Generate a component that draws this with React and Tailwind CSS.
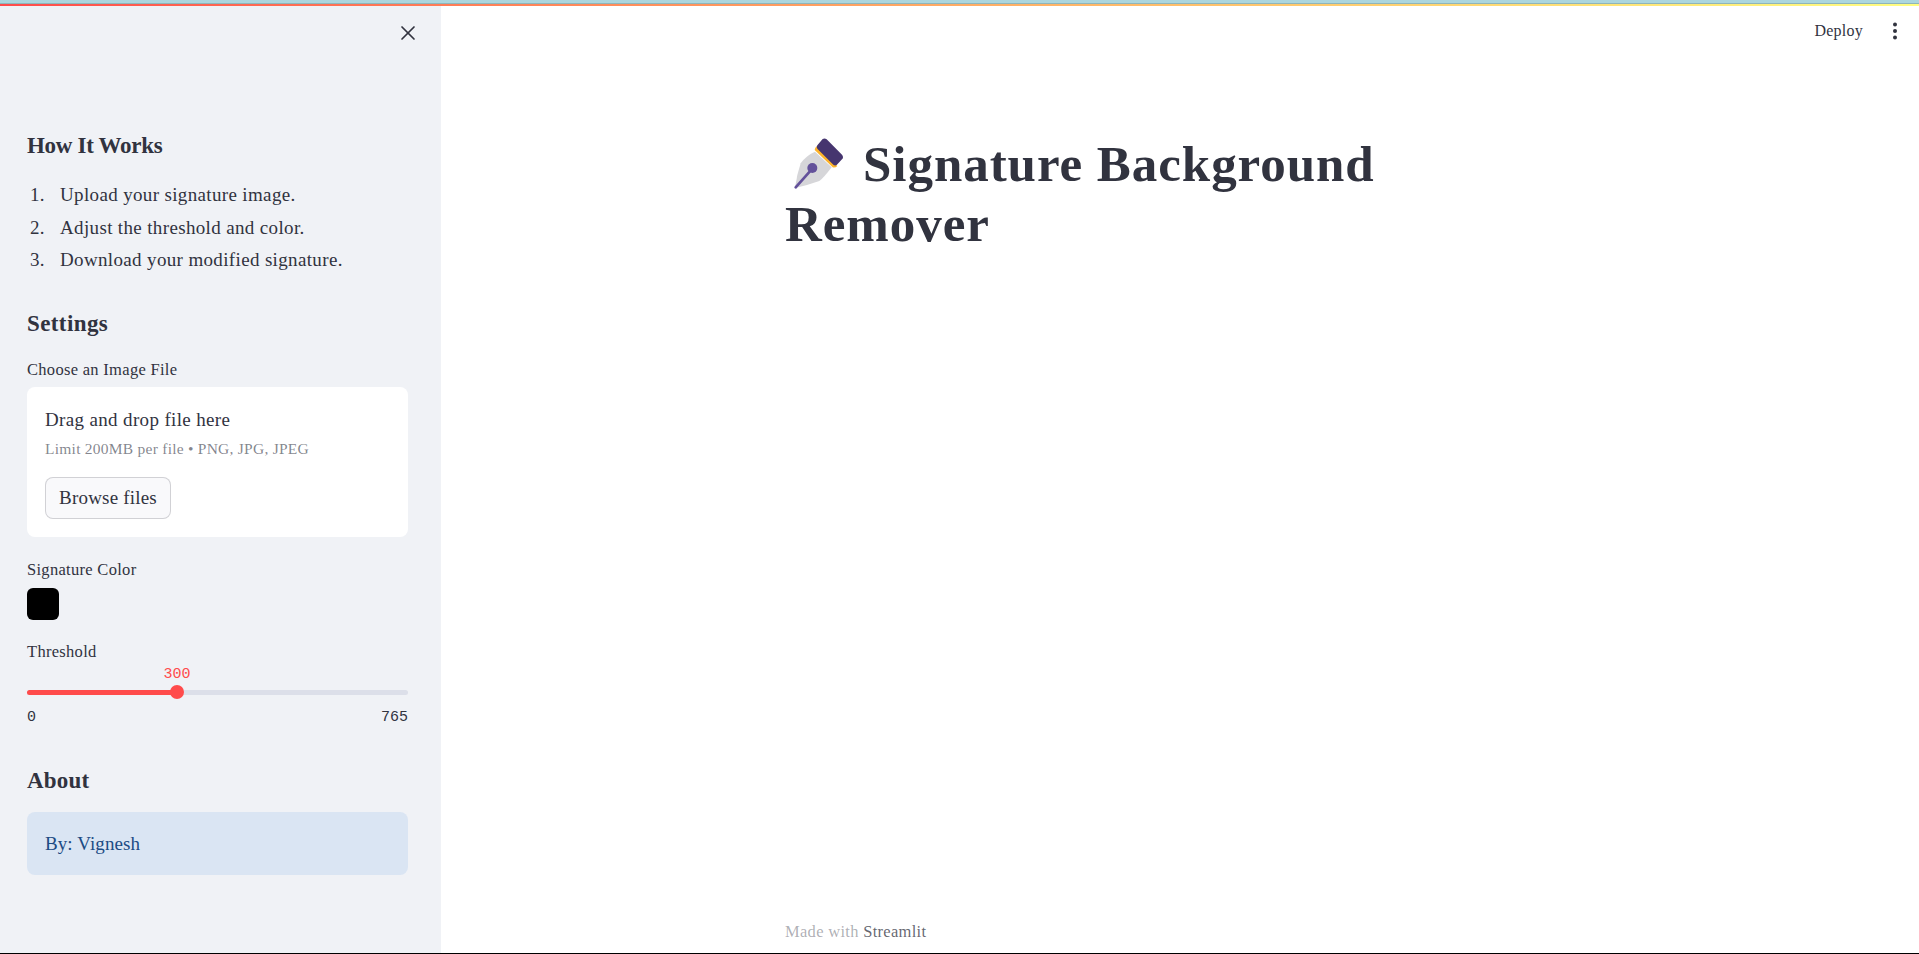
import { X } from 'lucide-react'

const serif = { fontFamily: '"Liberation Serif", serif' }
const mono = { fontFamily: '"Liberation Mono", monospace' }

function PenIcon() {
  return (
    <svg width="70" height="65" viewBox="0 0 210 195" className="absolute left-[-5px] top-[-4px]">
      <path d="M105 65 L155 112 Q130 145 118 153 Q85 165 45 174 Q50 135 62 100 Q80 75 105 65 Z" fill="#d6d6d9" />
      <path d="M47 172 L95 118" stroke="#63519a" strokeWidth="8" strokeLinecap="round" />
      <circle cx="97" cy="114" r="15" fill="#63519a" />
      <path d="M104 60 Q104 53 112 48 L172 108 Q166 114 158 112 Z" fill="#fdb32b" />
      <path d="M112 46 L128 27 Q134 23 140 28 L186 74 Q192 82 186 88 L170 105 Q165 108 160 104 L112 56 Q108 50 112 46 Z" fill="#46356f" />
    </svg>
  )
}

export default function App() {
  return (
    <div className="h-[954px] w-[1919px] relative overflow-hidden bg-white text-[#31333f] border-b border-black" style={serif}>
      <div className="absolute inset-x-0 top-0 z-10">
        <div className="h-[3px] bg-[#acd6de]" />
        <div className="h-[1px] bg-[#8fb5ba]" />
        <div className="h-[2px] bg-gradient-to-r from-[#ff4b4b] to-[#fffd80]" />
      </div>

      <div className="flex h-full">
        <aside className="w-[441px] shrink-0 bg-[#f0f2f6] pl-[27px] pr-[33px] relative">
          <X className="absolute top-[21px] left-[396px] w-[24px] h-[24px]" strokeWidth={1.7} />

          <h3 className="pt-[130px] text-[23px] leading-[32px] font-bold tracking-[-0.3px]">How It Works</h3>
          <ol className="mt-[17px] text-[19px] tracking-[0.35px]">
            <li className="flex h-[32.5px] items-center"><span className="w-[33px] pl-[3px]">1.</span>Upload your signature image.</li>
            <li className="flex h-[32.5px] items-center"><span className="w-[33px] pl-[3px]">2.</span>Adjust the threshold and color.</li>
            <li className="flex h-[32.5px] items-center"><span className="w-[33px] pl-[3px]">3.</span>Download your modified signature.</li>
          </ol>

          <h3 className="mt-[31px] text-[23px] leading-[32px] font-bold tracking-[0.4px]">Settings</h3>
          <div className="mt-[18px] text-[16.5px] leading-[24px] tracking-[0.3px]">Choose an Image File</div>
          <div className="mt-[5px] h-[150px] rounded-lg bg-white px-[18px] pt-[20px]">
            <div className="text-[19px] leading-[26px] tracking-[0.35px]">Drag and drop file here</div>
            <div className="mt-[5px] text-[15.5px] leading-[22px] tracking-[0.25px] text-[#31333f]/60">Limit 200MB per file • PNG, JPG, JPEG</div>
            <button className="mt-[17px] h-[42px] w-[126px] rounded-lg border border-[#31333f]/20 bg-[#f9f9fb] pt-[1px] text-[19px] tracking-[0.2px]">Browse files</button>
          </div>

          <div className="mt-[21px] text-[16.5px] leading-[24px] tracking-[0.3px]">Signature Color</div>
          <div className="mt-[6px] h-[32px] w-[32px] rounded-md bg-black" />

          <div className="mt-[20px] text-[16.5px] leading-[24px] tracking-[0.3px]">Threshold</div>
          <div className="relative h-[30px]" style={mono}>
            <div className="absolute left-[135px] top-[1px] w-[30px] text-center text-[15px] leading-[20px] text-[#ff4b4b]">300</div>
            <div className="absolute inset-x-0 top-[26px] h-[5px] rounded-full bg-[#dcdfe9]" />
            <div className="absolute left-0 top-[26px] h-[5px] w-[150px] rounded-l-full bg-[#ff4b4b]" />
            <div className="absolute left-[143px] top-[21.5px] h-[14px] w-[14px] rounded-full bg-[#ff4b4b]" />
          </div>
          <div className="mt-[14px] flex justify-between text-[15px] leading-[20px]" style={mono}>
            <span>0</span>
            <span>765</span>
          </div>

          <h3 className="mt-[37px] text-[23px] leading-[32px] font-bold tracking-[0.2px]">About</h3>
          <div className="mt-[15px] flex h-[63px] items-center rounded-lg bg-[#dae5f3] px-[18px] pt-[2px] text-[19px] tracking-[0.1px] text-[#1c4b84]">By: Vignesh</div>
        </aside>

        <main className="flex-1 relative">
          <div className="absolute right-[22px] top-[19px] flex items-center gap-[30px]">
            <span className="text-[16px] leading-[24px] tracking-[0.25px]">Deploy</span>
            <svg width="4" height="18" viewBox="0 0 4 18" fill="#31333f">
              <circle cx="2" cy="2.5" r="2" /><circle cx="2" cy="9" r="2" /><circle cx="2" cy="15.5" r="2" />
            </svg>
          </div>

          <div className="ml-[344px] w-[736px] pt-[134px]">
            <h1 className="relative w-[640px] text-[51px] leading-[60px] font-bold tracking-[0.95px]">
              <PenIcon />
              <span className="inline-block w-[78px]" />
              Signature Background Remover
            </h1>
          </div>

          <div className="absolute left-[344px] top-[920px] text-[16.5px] leading-[24px] tracking-[0.3px] text-[#31333f]/40">
            Made with <span className="text-[#31333f]/75">Streamlit</span>
          </div>
        </main>
      </div>
    </div>
  )
}
